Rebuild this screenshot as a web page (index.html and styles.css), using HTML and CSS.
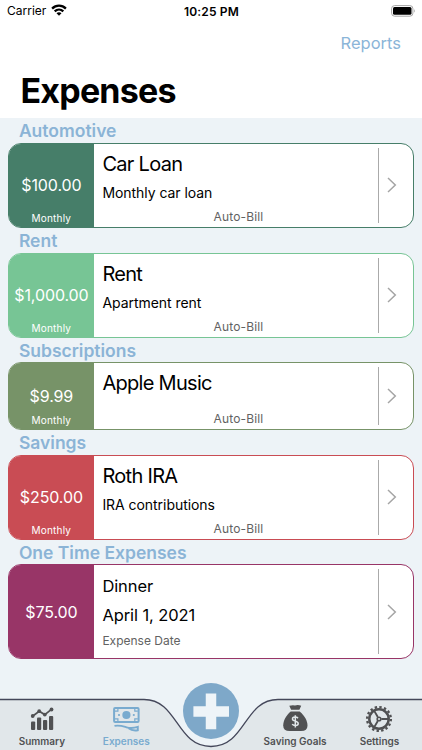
FILE: index.html
```html
<!DOCTYPE html>
<html lang="en">
  <head>
    <meta charset="UTF-8" />
    <meta name="viewport" content="width=device-width, initial-scale=1.0" />
    <title>Expenses</title>
    <link rel="stylesheet" href="styles.css">
  </head>
  <body>
    <div class="app">
      <header class="header">
        <div class="status-bar">
          <div class="carrier">
            <span>Carrier</span>
            <svg class="wifi" width="16" height="12" viewBox="0 0 16 12">
              <g fill="none" stroke="#000" stroke-width="2.3">
                <path d="M1.1 4.6 C5 .7 11 .7 14.9 4.6" />
                <path d="M3.7 7.4 C6.2 5 9.8 5 12.3 7.4" />
              </g>
              <path d="M5.5 9.2 C7 7.9 9 7.9 10.5 9.2 L8 11.7 Z" />
            </svg>
          </div>
          <span class="time">10:25 PM</span>
          <svg class="battery" width="25" height="12" viewBox="0 0 25 12">
            <rect x=".6" y=".6" width="21.3" height="10.6" rx="3" fill="#fff" stroke="#a5a5a5" />
            <rect x="2" y="2" width="18.5" height="7.8" rx="1.5" />
            <path d="M23.2 4 Q25 5.9 23.2 7.8 Z" fill="#a5a5a5" />
          </svg>
        </div>
        <a class="reports" href="#">Reports</a>
        <h1>Expenses</h1>
      </header>

      <main class="list">
        <h2>Automotive</h2>
        <a class="card green" href="#">
          <div class="amount"><span>$100.00</span><small>Monthly</small></div>
          <div class="details">
            <h3>Car Loan</h3>
            <p>Monthly car loan</p>
            <span class="auto-bill">Auto-Bill</span>
          </div>
          <div class="arrow"><svg width="10" height="16" viewBox="0 0 10 16"><path d="M1 1 L8.3 8 L1 15" /></svg></div>
        </a>

        <h2>Rent</h2>
        <a class="card mint" href="#">
          <div class="amount"><span>$1,000.00</span><small>Monthly</small></div>
          <div class="details">
            <h3>Rent</h3>
            <p>Apartment rent</p>
            <span class="auto-bill">Auto-Bill</span>
          </div>
          <div class="arrow"><svg width="10" height="16" viewBox="0 0 10 16"><path d="M1 1 L8.3 8 L1 15" /></svg></div>
        </a>

        <h2>Subscriptions</h2>
        <a class="card olive short" href="#">
          <div class="amount"><span>$9.99</span><small>Monthly</small></div>
          <div class="details">
            <h3>Apple Music</h3>
            <span class="auto-bill">Auto-Bill</span>
          </div>
          <div class="arrow"><svg width="10" height="16" viewBox="0 0 10 16"><path d="M1 1 L8.3 8 L1 15" /></svg></div>
        </a>

        <h2>Savings</h2>
        <a class="card red" href="#">
          <div class="amount"><span>$250.00</span><small>Monthly</small></div>
          <div class="details">
            <h3>Roth IRA</h3>
            <p>IRA contributions</p>
            <span class="auto-bill">Auto-Bill</span>
          </div>
          <div class="arrow"><svg width="10" height="16" viewBox="0 0 10 16"><path d="M1 1 L8.3 8 L1 15" /></svg></div>
        </a>

        <h2>One Time Expenses</h2>
        <a class="card purple one-time" href="#">
          <div class="amount"><span>$75.00</span></div>
          <div class="details">
            <h3>Dinner</h3>
            <p>April 1, 2021</p>
            <span class="date-label">Expense Date</span>
          </div>
          <div class="arrow"><svg width="10" height="16" viewBox="0 0 10 16"><path d="M1 1 L8.3 8 L1 15" /></svg></div>
        </a>
      </main>

      <nav class="tab-bar">
        <svg class="tab-shape" width="422" height="52" viewBox="0 0 422 52">
          <path d="M-2 1.5 H144 C178 1.5 176 48.5 211 48.5 C246 48.5 244 1.5 278 1.5 H424 V54 H-2 Z" fill="#e1e7ea" stroke="#44475a" stroke-width="1.3" />
        </svg>
        <a class="tab" href="#">
          <svg width="28" height="28" viewBox="0 0 28 28" fill="#505153">
            <rect x="3" y="16.5" width="4.2" height="8.5" rx="1" />
            <rect x="9" y="12.5" width="4.2" height="12.5" rx="1" />
            <rect x="15" y="15" width="4.2" height="10" rx="1" />
            <rect x="21" y="11" width="4.2" height="14" rx="1" />
            <path d="M4.5 11.2 L11.2 6.2 L16.8 9.6 L23.7 4.2" fill="none" stroke="#505153" stroke-width="1.7" />
            <circle cx="4.7" cy="11" r="1.9" />
            <circle cx="11.2" cy="6.2" r="1.9" />
            <circle cx="16.8" cy="9.6" r="1.9" />
            <circle cx="23.5" cy="4.5" r="1.9" />
          </svg>
          <span>Summary</span>
        </a>
        <a class="tab active" href="#">
          <svg width="28" height="28" viewBox="0 0 28 28" fill="none" stroke="#79abcf" stroke-width="2">
            <rect x="2.1" y="3" width="24.5" height="14" rx="1" />
            <path d="M5.9 3.6 V6.2 H2.9 M22.8 3.6 V6.2 H25.8 M5.9 16.6 V13.8 H2.9 M22.8 16.6 V13.8 H25.8" stroke-width="1.2" />
            <circle cx="14.4" cy="10" r="4.1" fill="#79abcf" stroke="none" />
            <circle cx="7" cy="10" r="1.1" fill="#79abcf" stroke="none" />
            <circle cx="21.8" cy="10" r="1.1" fill="#79abcf" stroke="none" />
            <path d="M2.5 20.9 C7.5 19.9 10.5 21.1 14.5 22.3 S21.5 23.3 25.8 21.9 V25.3 C22 25.9 19 25.3 16.7 23.3" stroke-width="1.9" />
          </svg>
          <span>Expenses</span>
        </a>
        <a class="add" href="#" aria-label="Add">
          <svg width="56" height="56" viewBox="0 0 56 56">
            <circle cx="28" cy="28" r="28" fill="#7ea8c9" />
            <path d="M28 10.6 V46.2 M10.4 28.4 H46" stroke="#eef4f8" stroke-width="10.5" />
          </svg>
        </a>
        <a class="tab" href="#">
          <svg width="28" height="28" viewBox="0 0 28 28" fill="#505153">
            <path d="M8.3 .8 Q11.5 -.1 14 .5 Q17 -.5 20.2 .8 L18.4 4.8 H10.1 Z" />
            <path d="M9.7 6.4 H18.7 C23.5 10.4 26.5 15.7 26.5 20.6 Q26.5 26.1 20 26.1 H8.7 Q2.2 26.1 2.2 20.6 C2.2 15.7 5 10.4 9.7 6.4 Z" />
            <path d="M17 13.2 C15.6 11.5 11.5 11.7 11.5 14 C11.5 16.9 17.2 15.3 17.2 18.5 C17.2 21.1 12.6 21.2 11.2 19.1 M14.3 10.2 V22.5" fill="none" stroke="#e1e7ea" stroke-width="1.5" />
          </svg>
          <span>Saving Goals</span>
        </a>
        <a class="tab" href="#">
          <svg width="28" height="28" viewBox="-14 -14 28 28" fill="none" stroke="#505153">
            <circle r="9.7" stroke-width="2.5" />
            <circle r="11.9" stroke-width="2.3" stroke-dasharray="2.4 2.27" />
            <circle r="1.8" stroke-width="1.6" />
            <path d="M2.3 0 H9 M-1.2 -2 L-4.6 -7.9 M-1.2 2 L-4.6 7.9" stroke-width="1.9" />
          </svg>
          <span>Settings</span>
        </a>
      </nav>
    </div>
  </body>
</html>
```

FILE: styles.css
```css
* {
  box-sizing: border-box;
}
body {
  margin: 0;
  font-family: Inter, "Liberation Sans", sans-serif;
  color: #000;
  background: #edf3f7;
}
a {
  color: inherit;
  text-decoration: none;
}
h1,
h2,
h3,
p {
  margin: 0;
}
svg {
  display: block;
}
.app {
  display: flex;
  flex-direction: column;
  width: 422px;
  height: 750px;
  overflow: hidden;
}
.header {
  height: 118.4px;
  background: #fff;
}
.status-bar {
  display: grid;
  grid-template-columns: 1fr auto 1fr;
  align-items: center;
  height: 22px;
  padding: 0 6px 0 7px;
}
.carrier {
  display: flex;
  align-items: center;
  gap: 5px;
  font-size: 12px;
  line-height: 16px;
}
.wifi {
  margin-bottom: 2px;
}
.time {
  font-size: 12px;
  font-weight: 600;
  letter-spacing: 0.15px;
}
.battery {
  justify-self: end;
  margin-bottom: 1px;
}
.reports {
  display: block;
  padding-right: 21px;
  color: #8bb5d8;
  font-size: 16.5px;
  line-height: 43px;
  text-align: right;
}
h1 {
  padding-left: 20.5px;
  font-size: 34px;
  font-weight: 700;
  line-height: 52px;
  letter-spacing: -0.8px;
}
.list {
  flex: 1;
  padding: 0 8.5px 0 8.4px;
}
h2 {
  height: 24.6px;
  padding-left: 10.5px;
  color: #8bb4d6;
  font-size: 17.5px;
  font-weight: 600;
  line-height: 25px;
}
.card {
  display: grid;
  grid-template-columns: 85px 1fr 35px;
  height: 85px;
  overflow: hidden;
  background: #fff;
  border: 1px solid var(--color);
  border-radius: 13px;
}
.green {
  --color: #467e69;
}
.mint {
  --color: #77c595;
}
.olive {
  --color: #779368;
}
.red {
  --color: #c94c54;
}
.purple {
  --color: #983567;
}
.short {
  height: 67.8px;
}
.amount {
  display: grid;
  color: #fff;
  background: var(--color);
  justify-items: center;
}
.amount span,
.amount small {
  grid-area: 1 / 1;
}
.amount span {
  align-self: center;
  padding-right: 1px;
  font-size: 16px;
  line-height: 20px;
  letter-spacing: -0.1px;
}
.amount small {
  align-self: end;
  padding: 0 1px 2px 0;
  font-size: 10px;
  line-height: 14px;
  letter-spacing: 0.2px;
}
.details {
  display: flex;
  flex-direction: column;
  padding: 6px 3px 2px 8px;
}
h3 {
  font-size: 20px;
  font-weight: 400;
  line-height: 28px;
  letter-spacing: -0.7px;
}
.details p {
  font-size: 14px;
  line-height: 30px;
  letter-spacing: -0.05px;
}
.auto-bill {
  margin-top: auto;
  color: #626262;
  font-size: 12px;
  line-height: 16px;
  letter-spacing: 0.15px;
  text-align: center;
}
.arrow {
  display: flex;
  align-items: center;
  margin: 4px 0;
  padding-left: 8px;
  border-left: 1px solid #aaa;
}
.arrow path {
  fill: none;
  stroke: #a5a5a5;
  stroke-width: 1.5;
}
.one-time {
  height: 95px;
}
.one-time .details {
  padding-top: 7px;
}
.one-time h3,
.one-time p {
  font-size: 16.5px;
  line-height: 29px;
  letter-spacing: -0.1px;
}
.date-label {
  color: #626262;
  font-size: 12px;
  line-height: 22px;
}
.tab-bar {
  position: relative;
  display: grid;
  grid-template-columns: repeat(5, 84.4px);
  height: 52px;
}
.tab-shape {
  position: absolute;
  top: 0;
  left: 0;
}
.tab {
  position: relative;
  display: flex;
  flex-direction: column;
  align-items: center;
  padding: 7px 0.6px 0 0;
  color: #505153;
  font-size: 10px;
  font-weight: 600;
  line-height: 17px;
  white-space: nowrap;
}
.tab.active {
  color: #79abcf;
}
.add {
  position: relative;
  justify-self: center;
  margin-top: -15px;
}
```
